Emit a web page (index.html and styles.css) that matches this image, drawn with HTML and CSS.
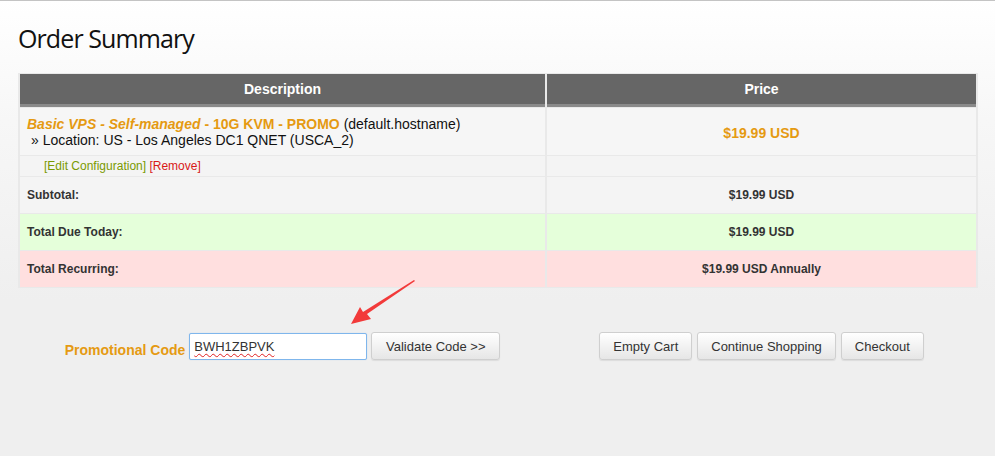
FILE: index.html
```html
<!DOCTYPE html>
<html>
<head>
<meta charset="utf-8">
<title>Order Summary</title>
<link rel="stylesheet" href="styles.css">
</head>
<body>
<div class="page">
  <h1 class="title">Order Summary</h1>
  <table class="cart">
    <thead>
      <tr>
        <th class="col-desc">Description</th>
        <th class="col-price">Price</th>
      </tr>
    </thead>
    <tbody>
      <tr class="row-product">
        <td class="desc">
          <div class="product-line"><span class="prod-name"><em>Basic VPS - Self-managed</em> - 10G KVM - PROMO</span> (default.hostname)</div>
          <div class="location">&raquo; Location: US - Los Angeles DC1 QNET (USCA_2)</div>
        </td>
        <td class="price price-orange">$19.99 USD</td>
      </tr>
      <tr class="row-actions">
        <td class="actions"><a class="edit" href="#">[Edit Configuration]</a> <a class="remove" href="#">[Remove]</a></td>
        <td></td>
      </tr>
      <tr class="row-total">
        <td class="label">Subtotal:</td>
        <td class="price">$19.99 USD</td>
      </tr>
      <tr class="row-total row-due">
        <td class="label">Total Due Today:</td>
        <td class="price">$19.99 USD</td>
      </tr>
      <tr class="row-total row-recurring">
        <td class="label">Total Recurring:</td>
        <td class="price">$19.99 USD Annually</td>
      </tr>
    </tbody>
  </table>

  <div class="bottom">
    <div class="promo">
      <span class="promo-label">Promotional Code</span>
      <div class="promo-input"><span class="misspelled">BWH1ZBPVK</span></div>
      <button class="btn btn-validate">Validate Code &gt;&gt;</button>
      <svg class="arrow" width="80" height="50" viewBox="0 0 80 50">
        <path d="M65 1 L17 34 L21 39 L1 44 L10 27 L13 32 L64 0 Z" fill="#f23a3a"/>
      </svg>
    </div>
    <div class="cart-buttons">
      <button class="btn">Empty Cart</button>
      <button class="btn">Continue Shopping</button>
      <button class="btn">Checkout</button>
    </div>
  </div>
</div>
</body>
</html>
```
FILE: styles.css
```css
html, body {
  margin: 0;
  padding: 0;
}
body {
  width: 995px;
  height: 456px;
  box-sizing: border-box;
  border-top: 1px solid #c4c4c4;
  background: linear-gradient(#ffffff 0px, #f7f7f7 120px, #efefef 300px, #efefef 456px);
  font-family: "Liberation Sans", Arial, sans-serif;
  color: #222;
  overflow: hidden;
}
.page {
  padding: 0 17px 0 18px;
}
.title {
  margin: 0;
  padding: 20px 0 0 0;
  height: 73px;
  box-sizing: border-box;
  font-family: "Open Sans", sans-serif;
  font-weight: 400;
  font-size: 25px;
  letter-spacing: -0.9px;
  line-height: 34px;
  color: #111;
}
.cart {
  width: 960px;
  border-collapse: separate;
  border-spacing: 2px 1px;
  background: #e9e9e9;
  table-layout: fixed;
  margin-top: -1px;
}
.cart th {
  background: #666666;
  color: #fff;
  font-size: 14px;
  font-weight: bold;
  height: 30px;
  padding: 0;
  border-bottom: 3px solid #8a8a8a;
  text-align: center;
  vertical-align: middle;
}
.col-desc { width: 525px; }
.cart td {
  padding: 0;
  background: #f6f6f6;
  vertical-align: middle;
}
.row-product td { height: 47px; }
.desc {
  padding-left: 7px !important;
  font-size: 14px;
  line-height: 16px;
  color: #111;
}
.prod-name {
  color: #e59a12;
  font-weight: bold;
}
.prod-name em { font-style: italic; }
.location { padding-left: 4px; }
.price {
  text-align: center;
  font-size: 12px;
  font-weight: bold;
  color: #333;
}
.row-product .price-orange {
  color: #e59a12;
  font-size: 14px;
  height: 44px;
  padding-top: 3px;
}
.row-actions td {
  height: 20px;
  background: #f4f4f4;
}
.actions {
  padding-left: 24px !important;
  font-size: 12px;
}
.actions a { text-decoration: none; }
.edit { color: #7a9a01; }
.remove { color: #d81818; }
.row-total td { height: 36px; background: #f4f4f4; }
.row-total .label {
  padding-left: 7px;
  font-size: 12px;
  font-weight: bold;
  color: #333;
}
.row-due td { background: #e5ffda; }
.row-recurring td { background: #ffdfdf; }

.bottom {
  display: grid;
  grid-template-columns: 527px 431px;
  padding-top: 44px;
}
.promo {
  position: relative;
  display: flex;
  align-items: center;
  justify-content: center;
  padding-left: 2px;
}
.promo-label {
  color: #e59a12;
  font-weight: bold;
  font-size: 14px;
  margin-right: 4px;
  padding-top: 8px;
}
.promo-input {
  width: 172px;
  height: 23px;
  border: 1px solid #7fb6ec;
  border-radius: 2px;
  background: #fff;
  font-size: 13px;
  line-height: 23px;
  padding: 1px 0 1px 4px;
  color: #333;
  box-shadow: 0 0 1px rgba(80, 150, 230, 0.4);
  margin-right: 4px;
}
.misspelled {
  text-decoration: underline wavy #e02020;
  text-decoration-thickness: 1px;
  text-underline-offset: 2px;
}
.btn {
  height: 28px;
  padding: 0 13px;
  border: 1px solid #cfcfcf;
  border-radius: 3px;
  background: linear-gradient(#ffffff, #e6e6e6);
  box-shadow: 0 1px 1px rgba(0,0,0,0.08);
  font-family: "Liberation Sans", Arial, sans-serif;
  font-size: 13px;
  color: #333;
}
.btn-validate {
  width: 129px;
  padding: 0;
}
.arrow {
  position: absolute;
  left: 332px;
  top: -52px;
}
.cart-buttons {
  display: flex;
  align-items: center;
  justify-content: center;
  gap: 5px;
  padding-left: 2px;
}
```
